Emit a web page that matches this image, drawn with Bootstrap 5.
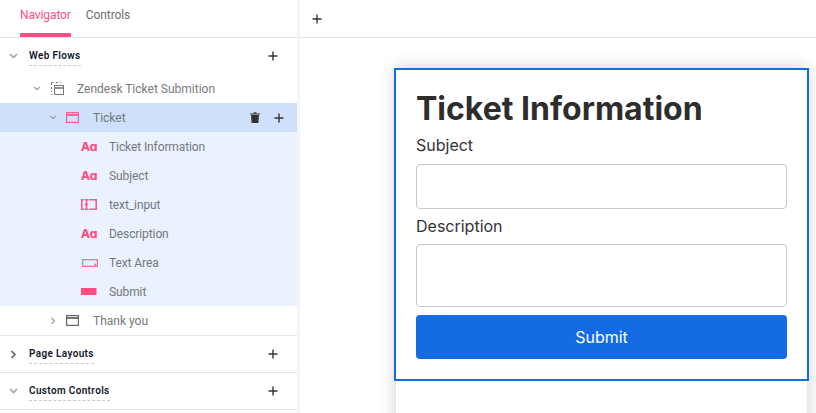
<!DOCTYPE html>
<html lang="en">
<head>
<meta charset="utf-8">
<title>Ticket</title>
<link href="https://cdn.jsdelivr.net/npm/bootstrap@5.3.0/dist/css/bootstrap.min.css" rel="stylesheet">
<style>
html,body{height:413px;overflow:hidden;background:#fff}
.shell{height:413px;font-family:Roboto,"Liberation Sans",sans-serif}
.side-pane{width:297px;flex:none;background:#fff;color:#77787b;font-size:12px}
.gutter{width:3px;flex:none;background:#f4f4f5}
.work-pane{flex:1;min-width:0;font-family:Inter,"Liberation Sans",sans-serif}
.tab-strip{height:38px;border-bottom:1px solid #e3e3e3;padding-left:20px;gap:15px}
.tab-item{height:37px;padding-top:8px;color:#6d6e71;font-size:12px;line-height:14px;letter-spacing:-.1px}
.tab-on{color:#ff4d82;border-bottom:4px solid #ff4d82}
.sect-head{height:37px;padding-left:9px;padding-right:19px;border-bottom:1px solid #e3e3e3}
.sect-first{border-bottom:0;height:36px}
.sect-after-tree{border-top:1px solid #e3e3e3;height:38px}
.sect-name{margin-left:11px;font-size:10px;font-weight:600;letter-spacing:.35px;line-height:12px;color:#101828;padding-bottom:3px;border-bottom:1px dashed #c9c9c9;margin-top:4px}
.tree-row{height:29px}
.indent-1{padding-left:33px}
.indent-2{padding-left:49px}
.indent-3{padding-left:81px}
.row-sel{background:#cfe1fa;padding-right:16px}
.kids{background:#e9f2fe}
.chev{flex:none}
.flow-ico{margin-left:10px;flex:none}
.flow-lbl{margin-left:13px}
.page-ico{margin-left:9px;flex:none}
.page-lbl{margin-left:14px}
.row-plus{margin-left:14px;margin-right:-3px}
.aa-glyph{width:16px;flex:none;font-family:"DejaVu Sans",sans-serif;font-weight:700;font-size:11.5px;line-height:14px;color:#ff4d82;white-space:nowrap;letter-spacing:-.3px}
.leaf-ico{width:16px;flex:none}
.area-ico{margin-left:1px;margin-right:-1px;flex:none}
.leaf-lbl{margin-left:12px;letter-spacing:-.1px}
.top-strip{height:38px;border-bottom:1px solid #e3e3e3;padding-left:12px}
.stage{padding:30px 9px 0 96px;background:#fff;height:375px;overflow:hidden}
.sheet{background:#fff;height:400px;box-shadow:0 0 16px rgba(0,0,0,.2)}
.sel-block{border:2px solid #146ce4;margin:0 -2px;padding:18px 20px 20px;background:#fff;height:313px}
.form-title{font-size:32px;font-weight:700;line-height:41px;color:#2d2d2d;margin:0 0 7px}
.fld-label{font-size:16px;line-height:19px;color:#333;margin:0 0 9px;display:block}
.fld-label-tight{margin-bottom:8px}
.fld-box{display:block;width:100%;height:45px;border:1px solid #c8c8c8;border-radius:4px;background:#fff;margin-bottom:8px}
.fld-area{height:63px;resize:none}
.send-btn{width:100%;height:44px;background:#146ce4;border:0;border-radius:4px;color:#fff;font-size:16px;font-family:inherit}
.send-btn:hover{background:#146ce4;color:#fff}
</style>
</head>
<body>
<div class="shell d-flex">
  <aside class="side-pane">
    <div class="tab-strip d-flex align-items-start">
      <div class="tab-item tab-on">Navigator</div>
      <div class="tab-item">Controls</div>
    </div>
    <div class="sect-head sect-first d-flex align-items-center">
      <svg class="chev" width="9" height="6" viewBox="0 0 9 6"><path d="M1 1l3.5 3.500L8 1" fill="none" stroke="#a6a6a6" stroke-width="1.700"/></svg>
      <span class="sect-name">Web Flows</span>
      <svg class="ms-auto" width="10" height="10" viewBox="0 0 10 10"><path d="M5 .5v9M.5 5h9" stroke="#333" stroke-width="1.400"/></svg>
    </div>
    <div class="tree-row indent-1 d-flex align-items-center">
      <svg class="chev" width="8" height="5" viewBox="0 0 8 5"><path d="M1 1l3 2.600L7 1" fill="none" stroke="#a6a6a6" stroke-width="1.400"/></svg>
      <svg class="flow-ico" width="13" height="13" viewBox="0 0 13 13" fill="none" stroke="#77787b"><path d="M.5 3V.5h2M5 .5h2M9 .5h1M.5 5v2M.5 9v1M.5 12v.5h1"/><rect x="3.500" y="3.500" width="9" height="9"/><path d="M3.500 6h9" stroke-width="1.600"/></svg>
      <span class="flow-lbl">Zendesk Ticket Submition</span>
    </div>
    <div class="tree-row row-sel indent-2 d-flex align-items-center">
      <svg class="chev" width="8" height="5" viewBox="0 0 8 5"><path d="M1 1l3 2.600L7 1" fill="none" stroke="#a6a6a6" stroke-width="1.400"/></svg>
      <svg class="page-ico" width="13" height="11" viewBox="0 0 13 11" fill="none" stroke="#fb5c90" stroke-width="1.200"><rect x=".6" y=".6" width="11.800" height="9.800"/><path d="M.6 3h11.800" stroke-width="1.800"/></svg>
      <span class="page-lbl">Ticket</span>
      <svg class="ms-auto" width="10" height="11" viewBox="0 0 10 11"><path d="M0 1.500h10v1H0zM3.500 .2h3v1h-3zM1 3h8l-.6 8H1.600z" fill="#333"/></svg>
      <svg class="row-plus" width="10" height="10" viewBox="0 0 10 10"><path d="M5 .5v9M.5 5h9" stroke="#333" stroke-width="1.400"/></svg>
    </div>
    <div class="kids">
      <div class="tree-row indent-3 d-flex align-items-center"><span class="aa-glyph">Aɑ</span><span class="leaf-lbl">Ticket Information</span></div>
      <div class="tree-row indent-3 d-flex align-items-center"><span class="aa-glyph">Aɑ</span><span class="leaf-lbl">Subject</span></div>
      <div class="tree-row indent-3 d-flex align-items-center">
        <svg class="leaf-ico" width="16" height="11" viewBox="0 0 16 11" fill="none" stroke="#fb5c90" stroke-width="1.600"><path d="M3 .8H.8v9.400H3M8 .8h7.200v9.400H8M5.500 .5v10M3.800 .8h3.400M3.800 10.200h3.400M3.800 5.500h3.400"/></svg>
        <span class="leaf-lbl">text_input</span></div>
      <div class="tree-row indent-3 d-flex align-items-center"><span class="aa-glyph">Aɑ</span><span class="leaf-lbl">Description</span></div>
      <div class="tree-row indent-3 d-flex align-items-center">
        <svg class="area-ico" width="16" height="8" viewBox="0 0 16 8" fill="none" stroke="#fb6c9c" stroke-width="1.300"><rect x=".7" y=".7" width="14.600" height="6.600"/><path d="M14 4v2.500h-2.500z" fill="#fb5c90" stroke="none"/></svg>
        <span class="leaf-lbl">Text Area</span></div>
      <div class="tree-row indent-3 d-flex align-items-center">
        <svg class="leaf-ico" width="16" height="7" viewBox="0 0 16 7"><rect width="15.500" height="7" fill="#ff4d82"/></svg>
        <span class="leaf-lbl">Submit</span></div>
    </div>
    <div class="tree-row indent-2 d-flex align-items-center">
      <svg class="chev" width="8" height="8" viewBox="0 0 8 8"><path d="M2.500 1l3 3-3 3" fill="none" stroke="#a6a6a6" stroke-width="1.400"/></svg>
      <svg class="page-ico" width="13" height="11" viewBox="0 0 13 11" fill="none" stroke="#666" stroke-width="1.200"><rect x=".6" y=".6" width="11.800" height="9.800"/><path d="M.6 3h11.800" stroke-width="1.800"/></svg>
      <span class="page-lbl">Thank you</span>
    </div>
    <div class="sect-head sect-after-tree d-flex align-items-center">
      <svg class="chev" width="9" height="9" viewBox="0 0 9 9"><path d="M2.500 1l3.500 3.500L2.500 8" fill="none" stroke="#666" stroke-width="1.700"/></svg>
      <span class="sect-name">Page Layouts</span>
      <svg class="ms-auto" width="10" height="10" viewBox="0 0 10 10"><path d="M5 .5v9M.5 5h9" stroke="#333" stroke-width="1.400"/></svg>
    </div>
    <div class="sect-head d-flex align-items-center">
      <svg class="chev" width="9" height="6" viewBox="0 0 9 6"><path d="M1 1l3.500 3.500L8 1" fill="none" stroke="#a6a6a6" stroke-width="1.700"/></svg>
      <span class="sect-name">Custom Controls</span>
      <svg class="ms-auto" width="10" height="10" viewBox="0 0 10 10"><path d="M5 .5v9M.5 5h9" stroke="#333" stroke-width="1.400"/></svg>
    </div>
  </aside>
  <div class="gutter"></div>
  <main class="work-pane">
    <div class="top-strip d-flex align-items-center">
      <svg width="10" height="10" viewBox="0 0 10 10"><path d="M5 .5v9M.5 5h9" stroke="#333" stroke-width="1.400"/></svg>
    </div>
    <div class="stage">
      <div class="sheet">
        <form class="sel-block">
          <h1 class="form-title">Ticket Information</h1>
          <label class="fld-label">Subject</label>
          <input class="fld-box" type="text" aria-label="Subject">
          <label class="fld-label fld-label-tight">Description</label>
          <textarea class="fld-box fld-area" aria-label="Description"></textarea>
          <button class="btn send-btn" type="button">Submit</button>
        </form>
      </div>
    </div>
  </main>
</div>
<script src="https://cdn.jsdelivr.net/npm/bootstrap@5.3.0/dist/js/bootstrap.bundle.min.js"></script>
</body>
</html>
